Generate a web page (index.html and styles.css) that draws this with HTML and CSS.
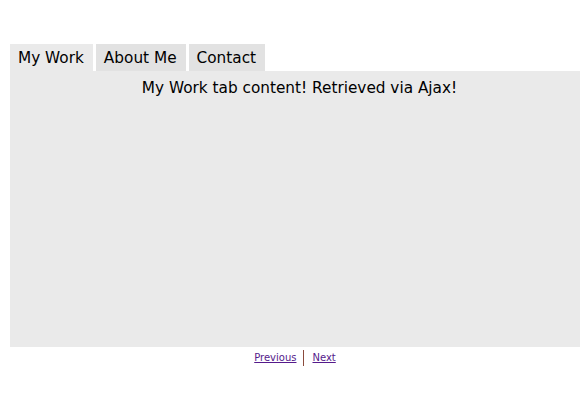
FILE: index.html
```html
<!DOCTYPE html>
<html>
<head>
<meta charset="utf-8">
<link rel="stylesheet" href="styles.css">
</head>
<body>
<div class="tabs">
  <ul class="tab-list">
    <li class="tab active">My Work</li>
    <li class="tab">About Me</li>
    <li class="tab">Contact</li>
  </ul>
  <div class="panel">My Work tab content! Retrieved via Ajax!</div>
  <div class="pager">
    <a href="#" class="pager-link">Previous</a>
    <a href="#" class="pager-link next">Next</a>
  </div>
</div>
</body>
</html>
```

FILE: styles.css
```css
html, body {
  margin: 0;
  padding: 0;
  background: #fff;
}
body {
  font-family: "DejaVu Sans", Verdana, sans-serif;
  color: #000;
}
.tabs {
  padding: 44px 0 0 10px;
}
.tab-list {
  list-style: none;
  margin: 0;
  padding: 0;
  display: flex;
  gap: 3px;
}
.tab {
  height: 27px;
  line-height: 28px;
  padding: 0 9px 0 8px;
  font-size: 15.3px;
  background: #e2e2e2;
  box-sizing: border-box;
}
.tab.active {
  background: #eaeaea;
}
.panel {
  background: #eaeaea;
  height: 276px;
  text-align: center;
  font-size: 15.3px;
  line-height: 34px;
  padding-left: 9px;
  box-sizing: border-box;
}
.pager {
  display: flex;
  justify-content: center;
  padding-top: 3px;
  font-size: 10px;
}
.pager-link {
  color: #551a8b;
  padding: 0 7px;
  line-height: 16px;
}
.pager-link.next {
  border-left: 1px solid #8b4a3c;
  padding-left: 8px;
}
```
